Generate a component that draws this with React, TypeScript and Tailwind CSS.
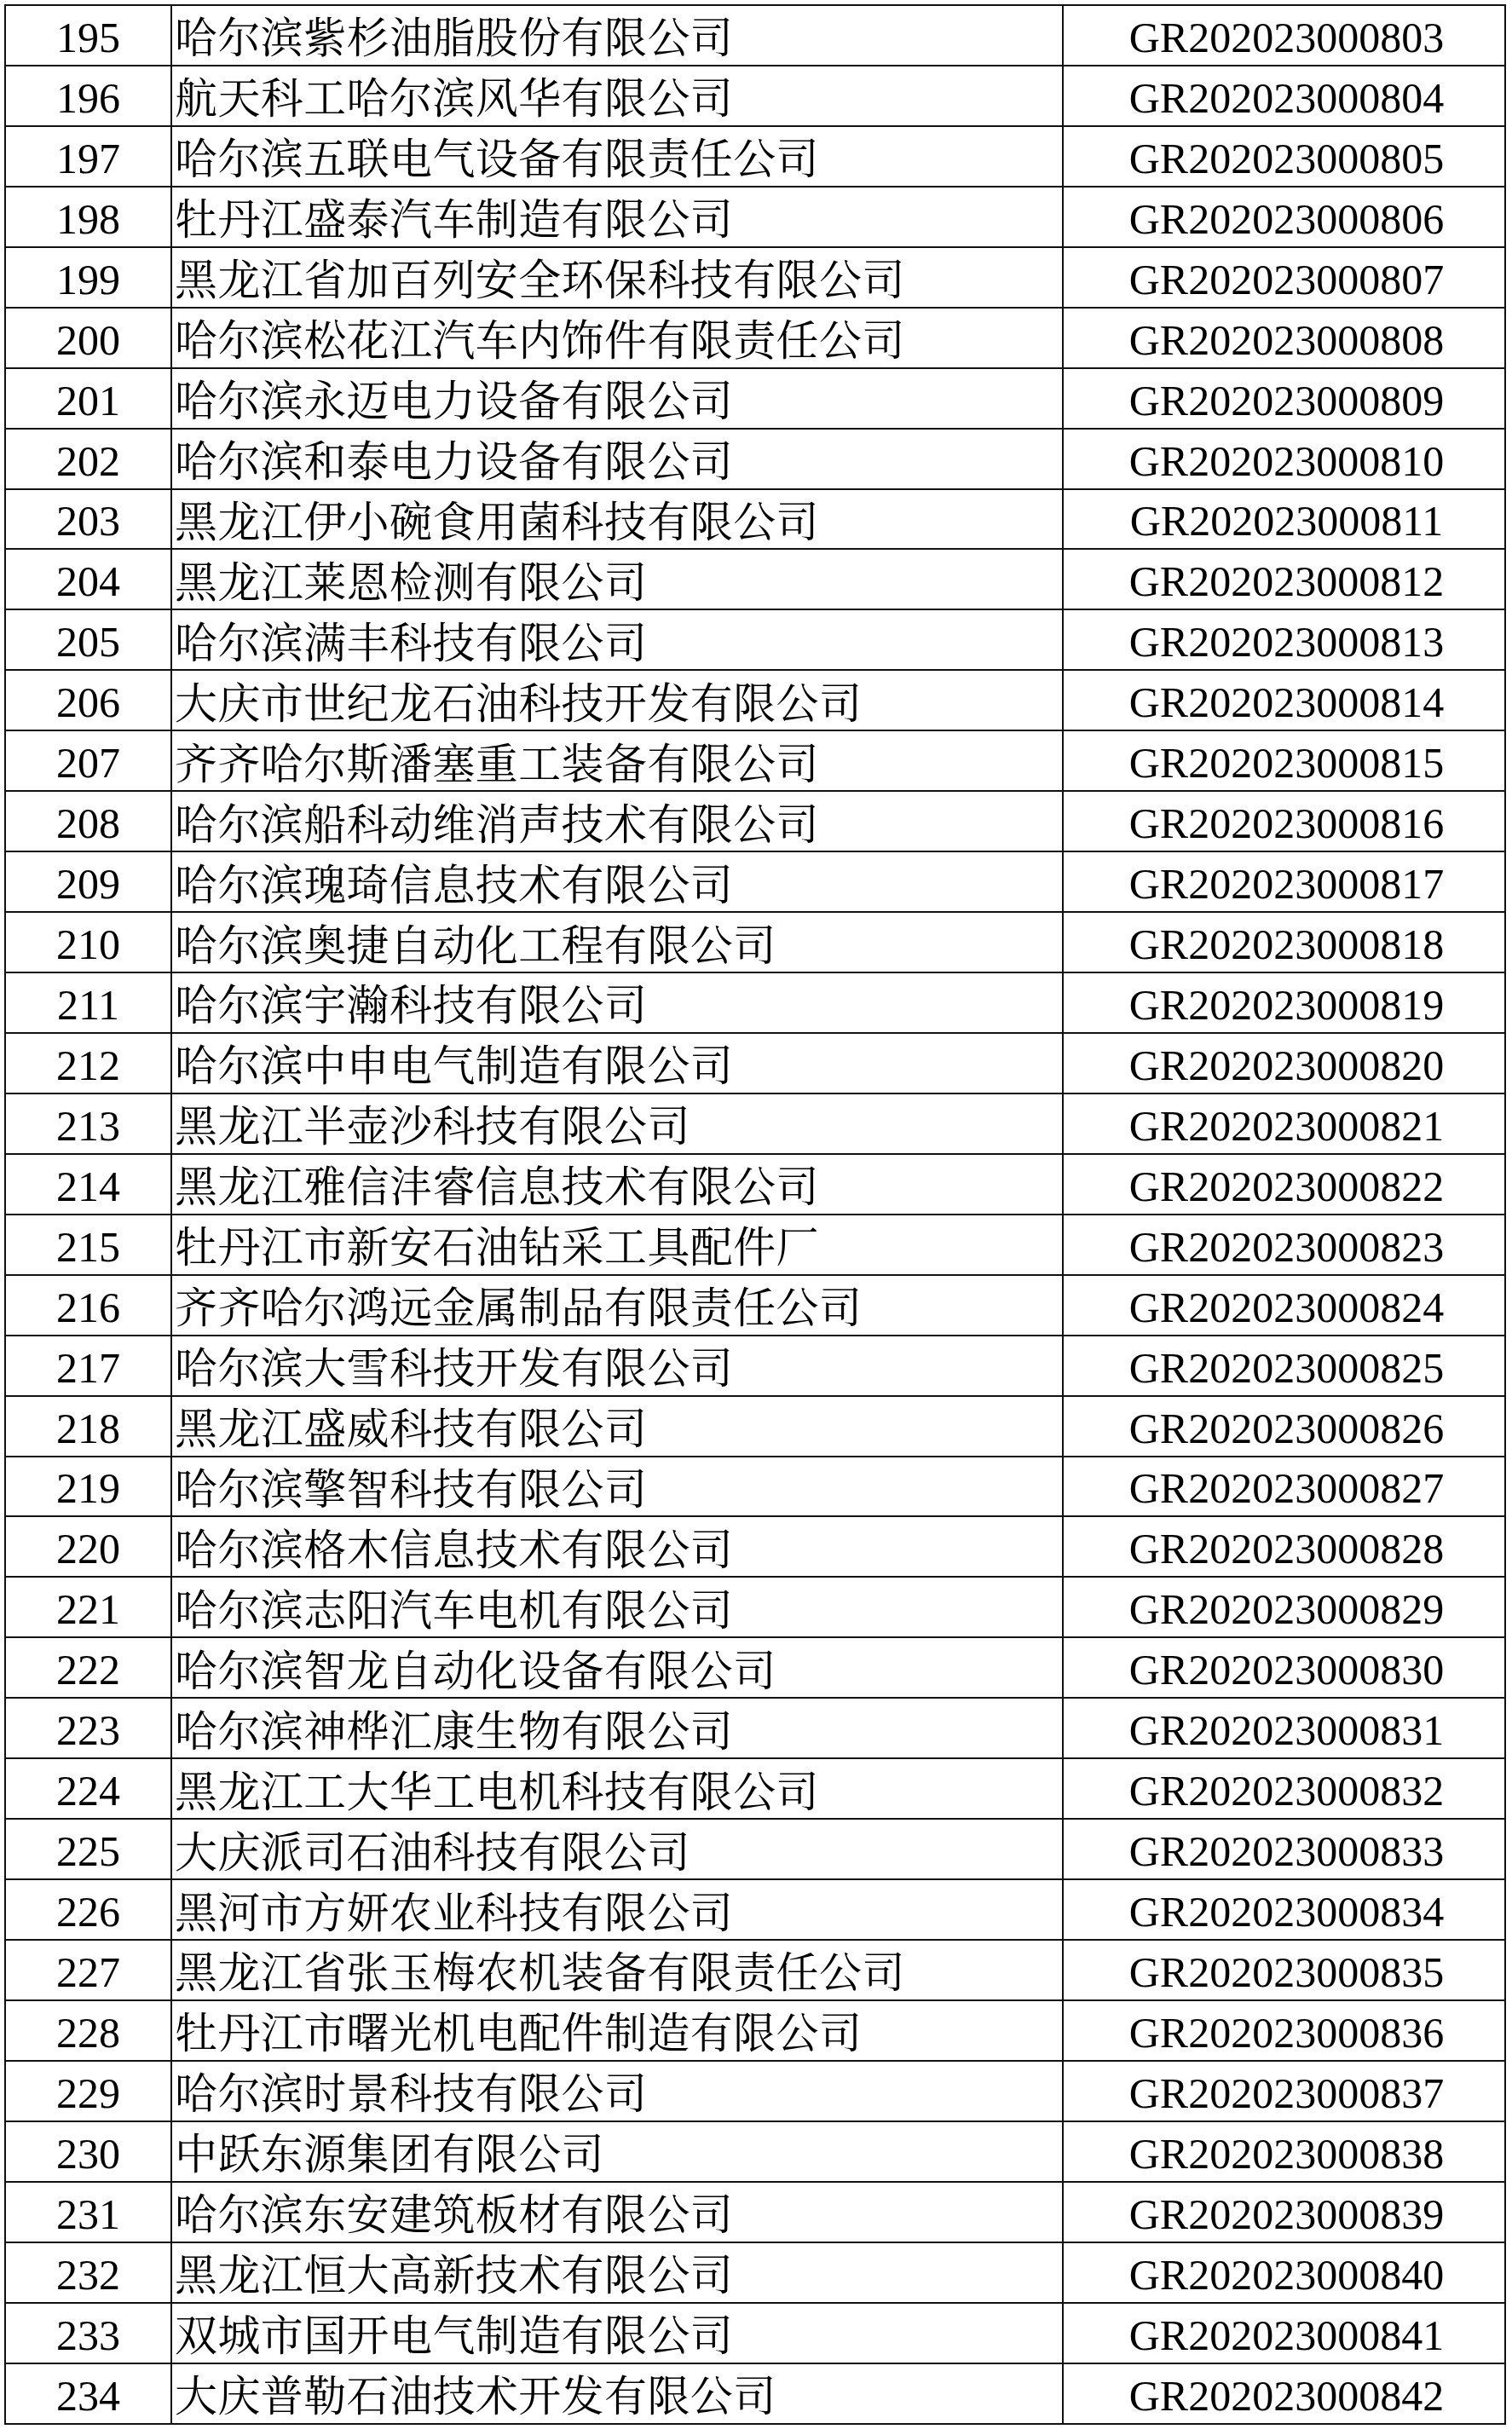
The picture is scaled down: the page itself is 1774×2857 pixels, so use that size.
const names = [
    "哈尔滨紫杉油脂股份有限公司",
    "航天科工哈尔滨风华有限公司",
    "哈尔滨五联电气设备有限责任公司",
    "牡丹江盛泰汽车制造有限公司",
    "黑龙江省加百列安全环保科技有限公司",
    "哈尔滨松花江汽车内饰件有限责任公司",
    "哈尔滨永迈电力设备有限公司",
    "哈尔滨和泰电力设备有限公司",
    "黑龙江伊小碗食用菌科技有限公司",
    "黑龙江莱恩检测有限公司",
    "哈尔滨满丰科技有限公司",
    "大庆市世纪龙石油科技开发有限公司",
    "齐齐哈尔斯潘塞重工装备有限公司",
    "哈尔滨船科动维消声技术有限公司",
    "哈尔滨瑰琦信息技术有限公司",
    "哈尔滨奥捷自动化工程有限公司",
    "哈尔滨宇瀚科技有限公司",
    "哈尔滨中申电气制造有限公司",
    "黑龙江半壶沙科技有限公司",
    "黑龙江雅信沣睿信息技术有限公司",
    "牡丹江市新安石油钻采工具配件厂",
    "齐齐哈尔鸿远金属制品有限责任公司",
    "哈尔滨大雪科技开发有限公司",
    "黑龙江盛威科技有限公司",
    "哈尔滨擎智科技有限公司",
    "哈尔滨格木信息技术有限公司",
    "哈尔滨志阳汽车电机有限公司",
    "哈尔滨智龙自动化设备有限公司",
    "哈尔滨神桦汇康生物有限公司",
    "黑龙江工大华工电机科技有限公司",
    "大庆派司石油科技有限公司",
    "黑河市方妍农业科技有限公司",
    "黑龙江省张玉梅农机装备有限责任公司",
    "牡丹江市曙光机电配件制造有限公司",
    "哈尔滨时景科技有限公司",
    "中跃东源集团有限公司",
    "哈尔滨东安建筑板材有限公司",
    "黑龙江恒大高新技术有限公司",
    "双城市国开电气制造有限公司",
    "大庆普勒石油技术开发有限公司",
];

// 195번부터 234번까지, 인증번호는 803부터 1씩 증가
const rows = names.map((name, i) => ({
    no: 195 + i,
    name,
    code: `GR202023000${803 + i}`,
}));

const App = () => {
    return (
        <div
            className="min-h-[2857px] w-[1774px] bg-white pl-[5px] pt-[5px] text-[50px] leading-none text-black"
            style={{ fontFamily: '"Liberation Serif", "Noto Serif CJK SC", "Noto Sans CJK SC", serif' }}
        >
            <div className="w-[1762px] border-l-2 border-t-2 border-[#111]">
                {rows.map((row) => (
                    <div key={row.no} className="flex h-[70.95px]">
                        <div className="flex w-[195px] items-center justify-center border-b-2 border-r-2 border-[#111] pt-[5px]">
                            {row.no}
                        </div>
                        <div className="flex w-[1046px] items-center border-b-2 border-r-2 border-[#111] pl-[3px] pt-[8px] tracking-[0.4px]">
                            {row.name}
                        </div>
                        <div className="flex w-[519px] items-center justify-center border-b-2 border-r-2 border-[#111] pl-[6px] pt-[5px]">
                            {row.code}
                        </div>
                    </div>
                ))}
            </div>
        </div>
    );
};

export default App;
